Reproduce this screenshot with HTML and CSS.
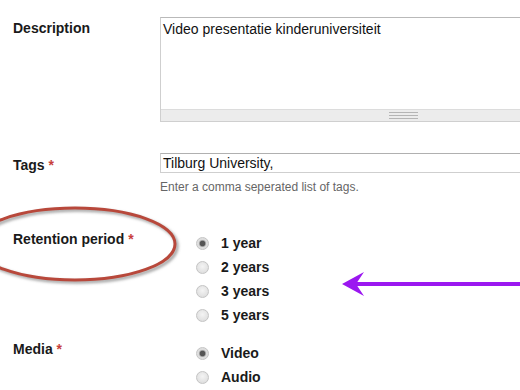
FILE: index.html
```html
<!DOCTYPE html>
<html>

<head>
    <title>Upload details</title>
    <link rel="stylesheet" href="styles.css">
</head>

<body>
    <div class="form">
        <div class="row row-description">
            <div class="label">Description</div>
            <div class="field">
                <div class="textarea">
                    <div class="textarea-text">Video presentatie kinderuniversiteit</div>
                    <div class="resize-bar"><span class="grip"></span></div>
                </div>
            </div>
        </div>

        <div class="row row-tags">
            <div class="label label-tags">Tags <span class="required">*</span></div>
            <div class="field">
                <div class="input">Tilburg University,</div>
                <div class="help">Enter a comma seperated list of tags.</div>
            </div>
        </div>

        <div class="row row-retention">
            <div class="label">Retention period <span class="required">*</span></div>
            <div class="field">
                <div class="option"><span class="radio checked"></span>1 year</div>
                <div class="option"><span class="radio"></span>2 years</div>
                <div class="option"><span class="radio"></span>3 years</div>
                <div class="option"><span class="radio"></span>5 years</div>
            </div>
        </div>

        <div class="row row-media">
            <div class="label">Media <span class="required">*</span></div>
            <div class="field">
                <div class="option"><span class="radio checked"></span>Video</div>
                <div class="option"><span class="radio"></span>Audio</div>
            </div>
        </div>
    </div>

    <!-- hand drawn annotations on top of the form -->
    <svg class="annotations" width="520" height="390" viewBox="0 0 520 390">
        <defs>
            <filter id="shadow" x="-20%" y="-40%" width="140%" height="180%">
                <feGaussianBlur stdDeviation="1.5"/>
            </filter>
        </defs>
        <ellipse cx="77" cy="246" rx="100" ry="36" fill="none" stroke="#9a9a9a" stroke-width="3" filter="url(#shadow)"/>
        <ellipse cx="75" cy="244" rx="100" ry="36" fill="none" stroke="#b8483b" stroke-width="3"/>
        <line x1="520" y1="284" x2="354" y2="284" stroke="#9b17f0" stroke-width="4"/>
        <polygon points="342,284 364,272 356,284 364,296" fill="#9b17f0"/>
    </svg>
</body>

</html>
```

FILE: styles.css
```css
html, body {
    margin: 0;
    background-color: #ffffff;
    overflow: hidden;
}

body {
    font-family: "Liberation Sans", Arial, sans-serif;
    color: #1a1a1a;
    width: 520px;
    height: 390px;
    position: relative;
}

.form {
    padding-top: 17px;
}

.row {
    display: flex;
}

.label {
    width: 147px;
    flex: none;
    padding-left: 13px;
    font-size: 14px;
    font-weight: bold;
    line-height: 16px;
}

.required {
    color: #c8403c;
}

.field {
    flex: 1;
    min-width: 0;
}

.row-description .label {
    padding-top: 3px;
}

/* the box runs on past the right edge of the window, so no right border */
.textarea {
    border: 1px solid #cfcfcf;
    border-top-color: #b9b9b9;
    border-right: none;
    height: 103px;
    display: flex;
    flex-direction: column;
}

.textarea-text {
    flex: 1;
    font-size: 14px;
    line-height: 16px;
    padding: 3px 2px;
    color: #111;
}

.resize-bar {
    height: 11px;
    background-color: #ececec;
    border-top: 1px solid #dcdcdc;
    position: relative;
}

.grip {
    position: absolute;
    left: 228px;
    top: 2px;
    width: 29px;
    height: 5px;
    border-top: 1px solid #b5b5b5;
    border-bottom: 1px solid #b5b5b5;
    background: linear-gradient(#ececec 0 2px, #b5b5b5 2px 3px, #ececec 3px);
}

.row-tags {
    margin-top: 31px;
}

.label-tags {
    padding-top: 4px;
}

.input {
    height: 18px;
    border: 1px solid #cfcfcf;
    border-top-color: #b0b0b0;
    border-right: none;
    font-size: 14px;
    line-height: 18px;
    padding: 0 2px;
    color: #111;
}

.help {
    margin-top: 7px;
    font-size: 12px;
    line-height: 14px;
    color: #666;
}

.row-retention {
    margin-top: 37px;
}

.row-media {
    margin-top: 14px;
}

.option {
    display: flex;
    align-items: center;
    height: 24px;
    font-size: 14px;
    font-weight: bold;
}

.radio {
    width: 11px;
    height: 11px;
    margin-left: 36px;
    margin-right: 12px;
    border: 1px solid #c4c4c4;
    border-radius: 50%;
    background: radial-gradient(circle at 50% 40%, #f4f4f4, #d8d8d8);
}

.radio.checked {
    background: radial-gradient(circle, #555 0 2.5px, #9a9a9a 3px, #dcdcdc 4px, #e6e6e6);
}

.annotations {
    position: absolute;
    top: 0;
    left: 0;
    pointer-events: none;
}
```
